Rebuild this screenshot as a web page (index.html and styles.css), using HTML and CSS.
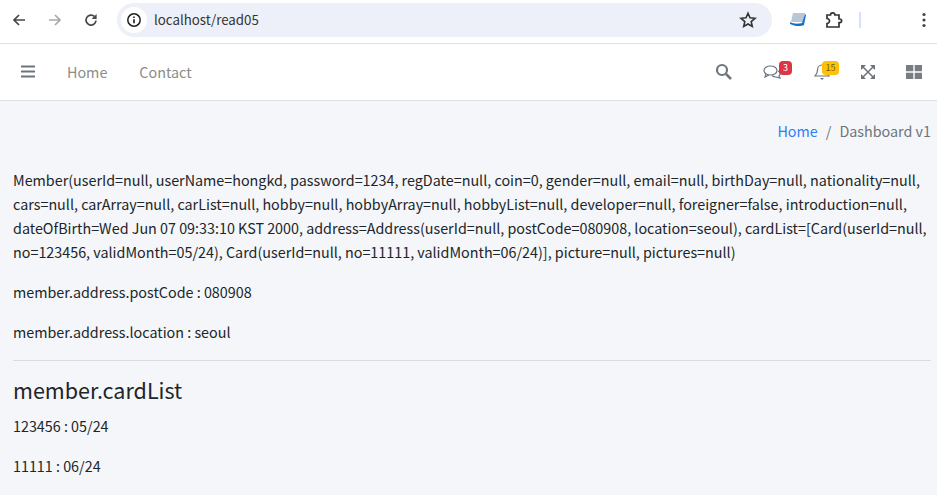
FILE: index.html
```html
<!DOCTYPE html>
<html lang="en">
<head>
  <meta charset="UTF-8" />
  <title>localhost/read05</title>
  <link rel="stylesheet" href="styles.css">
</head>
<body>
  <!-- Browser toolbar -->
  <div class="chrome">
    <svg class="tool back" width="16" height="16" viewBox="0 0 16 16"><path d="M14 8H3M8 3 3 8l5 5" fill="none" stroke="#474747" stroke-width="1.7"/></svg>
    <svg class="tool forward" width="16" height="16" viewBox="0 0 16 16"><path d="M2 8h11M8 3l5 5-5 5" fill="none" stroke="#a8a8a8" stroke-width="1.7"/></svg>
    <svg class="tool reload" width="16" height="16" viewBox="0 0 16 16"><path d="M13 8.5A5 5 0 1 1 11.4 4.4" fill="none" stroke="#474747" stroke-width="1.7"/><path d="M13.6 2v5h-5z" fill="#474747"/></svg>
    <div class="omnibox">
      <span class="site-info">
        <svg width="16" height="16" viewBox="0 0 16 16"><circle cx="8" cy="8" r="6.2" fill="none" stroke="#1f1f1f" stroke-width="1.5"/><path d="M8 7.2v4M8 4.6v1.5" stroke="#1f1f1f" stroke-width="1.6"/></svg>
      </span>
      <span class="url">localhost/read05</span>
      <svg class="star" width="18" height="18" viewBox="0 0 18 18"><path d="m9 2.2 2 4.600 5 .5-3.800 3.300 1.100 4.900L9 13l-4.300 2.500 1.100-4.900L2 7.300l5-.5z" fill="none" stroke="#333" stroke-width="1.600"/></svg>
    </div>
    <svg class="ext-note" width="18" height="16" viewBox="0 0 18 16"><path d="M4 1h12l-2 9H2z" fill="#b9c6d3"/><path d="M1 10c3 2 9 2 12 1l3-9 1 1-2 10c-4 2-10 1-14-1z" fill="#1a6fc4"/></svg>
    <svg class="ext-puzzle" width="18" height="18" viewBox="0 0 18 18"><path d="M2 4h3.500a2.200 2.200 0 0 1 4.400 0H14v4h.8a1.800 1.800 0 0 1 0 3.600H14V16H2v-3.500a2.500 2.500 0 0 0 0-5z" fill="none" stroke="#333" stroke-width="1.700"/></svg>
    <span class="divider"></span>
    <svg class="menu-dots" width="4" height="16" viewBox="0 0 4 16"><circle cx="2" cy="2.500" r="1.600" fill="#444"/><circle cx="2" cy="8" r="1.600" fill="#444"/><circle cx="2" cy="13.500" r="1.600" fill="#444"/></svg>
  </div>

  <!-- Navbar -->
  <nav class="navbar">
    <svg class="bars" width="14" height="16" viewBox="0 0 14 16"><path d="M0 2.500h14M0 7.500h14M0 12.500h14" stroke="#6c757d" stroke-width="2"/></svg>
    <a class="nav-link">Home</a>
    <a class="nav-link">Contact</a>
    <div class="nav-right">
      <svg class="nav-icon search" width="17" height="17" viewBox="0 0 17 17"><circle cx="7" cy="7" r="5" fill="none" stroke="#6c757d" stroke-width="2.200"/><path d="m11 11 5 5" stroke="#6c757d" stroke-width="2.500"/></svg>
      <span class="icon-wrap comments">
        <svg width="19" height="16" viewBox="0 0 19 16"><ellipse cx="7.500" cy="6.500" rx="6.500" ry="4.500" fill="none" stroke="#6c757d" stroke-width="1.200"/><path d="M3 10 2 13l4-2M15 7c2 1 3 3 1 5l1 2-4-1c-2 0-3-.5-4-1.500" fill="none" stroke="#6c757d" stroke-width="1.200"/></svg>
        <span class="badge badge-danger">3</span>
      </span>
      <span class="icon-wrap bell">
        <svg width="16" height="18" viewBox="0 0 16 18"><path d="M8 2c-3 0-4.500 2.500-4.500 5 0 3-1 4.500-2.500 6h14c-1.500-1.500-2.500-3-2.500-6 0-2.500-1.500-5-4.500-5z" fill="none" stroke="#6c757d" stroke-width="1.200"/><path d="M6 15h4l-2 2z" fill="#6c757d"/></svg>
        <span class="badge badge-warning">15</span>
      </span>
      <svg class="nav-icon expand" width="14" height="14" viewBox="0 0 14 14"><path d="M2 2l10 10M12 2 2 12" stroke="#6c757d" stroke-width="1.500"/><path d="M0 0h5L0 5zM9 0h5v5zM0 9l5 5H0zM14 9v5H9z" fill="#6c757d"/></svg>
      <svg class="nav-icon apps" width="16" height="14" viewBox="0 0 16 14"><path d="M0 0h7.300v6.200H0zM8.700 0H16v6.200H8.700zM0 7.800h7.300V14H0zM8.700 7.800H16V14H8.700z" fill="#777d82"/></svg>
    </div>
  </nav>

  <main class="content">
    <ol class="breadcrumb">
      <li><a class="crumb-link">Home</a></li>
      <li class="crumb-sep">/</li>
      <li class="crumb-active">Dashboard v1</li>
    </ol>

    <p>Member(userId=null, userName=hongkd, password=1234, regDate=null, coin=0, gender=null, email=null, birthDay=null, nationality=null, cars=null, carArray=null, carList=null, hobby=null, hobbyArray=null, hobbyList=null, developer=null, foreigner=false, introduction=null, dateOfBirth=Wed Jun 07 09:33:10 KST 2000, address=Address(userId=null, postCode=080908, location=seoul), cardList=[Card(userId=null, no=123456, validMonth=05/24), Card(userId=null, no=11111, validMonth=06/24)], picture=null, pictures=null)</p>
    <p>member.address.postCode : 080908</p>
    <p>member.address.location : seoul</p>
    <hr>
    <h3>member.cardList</h3>
    <p>123456 : 05/24</p>
    <p>11111 : 06/24</p>
  </main>
</body>
</html>
```

FILE: styles.css
```css
/* Base */
html, body {
  height: 100%;
}

body {
  margin: 0;
  overflow: hidden;
  background-color: #f4f6f9;
  color: #212529;
  font-family: "Noto Sans CJK KR", "Noto Sans", sans-serif;
  font-size: 14.34px;
  line-height: 24px;
}

/* Browser toolbar */
.chrome {
  display: flex;
  align-items: center;
  height: 40px;
  padding-bottom: 3px;
  background-color: #fff;
  border-bottom: 1px solid #e0e0e0;
}

.tool {
  flex: none;
}

.back {
  margin-left: 11px;
}

.forward {
  margin-left: 20px;
}

.reload {
  margin-left: 20px;
}

.omnibox {
  display: flex;
  align-items: center;
  width: 655px;
  height: 34px;
  margin-left: 18px;
  border-radius: 17px;
  background-color: #edf0f8;
}

.site-info {
  display: flex;
  align-items: center;
  justify-content: center;
  width: 26px;
  height: 26px;
  margin-left: 4px;
  border-radius: 50%;
  background-color: #fff;
}

.url {
  margin-left: 7px;
  font-size: 13.3px;
  color: #333;
}

.star {
  margin-left: auto;
  margin-right: 15px;
}

.ext-note {
  margin-left: 17px;
}

.ext-puzzle {
  margin-left: 18px;
}

.divider {
  width: 2px;
  height: 16px;
  margin-left: 16px;
  background-color: #d3e3fd;
}

.menu-dots {
  margin-left: 61px;
}

/* Navbar */
.navbar {
  display: flex;
  align-items: center;
  height: 56px;
  background-color: #fff;
  border-bottom: 1px solid #dee2e6;
}

.bars {
  margin-left: 21px;
}

.nav-link {
  margin-left: 32px;
  color: #8b8b8b;
}

.nav-right {
  display: flex;
  align-items: center;
  margin-left: auto;
}

.search {
  margin-top: -2px;
}

.icon-wrap {
  position: relative;
  display: flex;
}

.comments {
  margin-left: 31px;
}

.bell {
  margin-left: 32px;
}

.badge {
  position: absolute;
  height: 14px;
  border-radius: 4px;
  font-size: 9px;
  line-height: 14px;
  text-align: center;
}

.badge-danger {
  top: -3px;
  left: 16px;
  width: 13px;
  background-color: #dc3545;
  color: #fff;
}

.badge-warning {
  top: -2px;
  left: 8px;
  width: 17px;
  background-color: #ffc107;
  color: #6f5a10;
}

.expand {
  margin-left: 31px;
}

.apps {
  margin-left: 31px;
  margin-right: 15px;
}

/* Content */
.content {
  padding: 0 6px 0 13px;
}

.breadcrumb {
  display: flex;
  justify-content: flex-end;
  margin: 0;
  padding: 18px 0 0;
  list-style: none;
}

.crumb-link {
  color: #2f7df6;
}

.crumb-sep {
  margin: 0 8px;
  color: #6c757d;
}

.crumb-active {
  color: #6c757d;
}

p {
  margin: 0 0 16px;
}

.breadcrumb + p {
  margin-top: 25px;
}

hr {
  margin: 0 0 16px;
  border: 0;
  border-top: 1px solid #d9dbdd;
}

h3 {
  margin: 0 0 11px;
  font-size: 21.5px;
  font-weight: 400;
  line-height: 26px;
}
```
